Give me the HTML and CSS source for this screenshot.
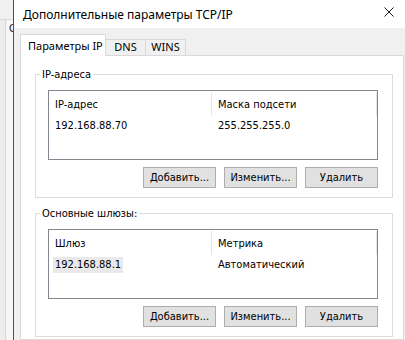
FILE: index.html
```html
<!DOCTYPE html>
<html lang="ru">
<head>
  <meta charset="UTF-8" />
  <title>Дополнительные параметры TCP/IP</title>
  <link rel="stylesheet" href="styles.css">
</head>
<body>
  <div class="backdrop">
    <div class="backdrop-top"></div>
    <div class="backdrop-body">
      <div class="backdrop-edge"></div>
      <div class="backdrop-fill"><span class="peek">С</span></div>
    </div>
  </div>

  <div class="dialog">
    <div class="titlebar">
      <span class="title">Дополнительные параметры TCP/IP</span>
      <svg class="close" width="10" height="10" viewBox="0 0 10 10">
        <path d="M0.5 0.5 L9.5 9.5 M9.5 0.5 L0.5 9.5" stroke="#1a1a1a" stroke-width="1" fill="none"/>
      </svg>
    </div>

    <div class="dialog-body">
      <div class="tabs">
        <div class="tab active">Параметры IP</div>
        <div class="tab">DNS</div>
        <div class="tab">WINS</div>
      </div>

      <div class="tab-page">
        <fieldset class="group">
          <legend>IP-адреса</legend>
          <div class="group-body">
            <div class="listbox">
              <div class="lv-head">
                <div class="lv-col first">IP-адрес</div>
                <div class="lv-col second">Маска подсети</div>
              </div>
              <div class="lv-row">
                <div class="lv-cell first"><span class="item">192.168.88.70</span></div>
                <div class="lv-cell second">255.255.255.0</div>
              </div>
            </div>
            <div class="buttons">
              <button class="btn">Добавить...</button>
              <button class="btn">Изменить...</button>
              <button class="btn">Удалить</button>
            </div>
          </div>
        </fieldset>

        <fieldset class="group">
          <legend>Основные шлюзы:</legend>
          <div class="group-body">
            <div class="listbox">
              <div class="lv-head">
                <div class="lv-col first">Шлюз</div>
                <div class="lv-col second">Метрика</div>
              </div>
              <div class="lv-row">
                <div class="lv-cell first"><span class="item selected">192.168.88.1</span></div>
                <div class="lv-cell second">Автоматический</div>
              </div>
            </div>
            <div class="buttons">
              <button class="btn">Добавить...</button>
              <button class="btn">Изменить...</button>
              <button class="btn">Удалить</button>
            </div>
          </div>
        </fieldset>
      </div>
    </div>
  </div>
</body>
</html>
```

FILE: styles.css
```css
:root {
  --dlg-bg: #f0f0f0;
  --tab-border: #d9d9d9;
  --group-border: #dcdcdc;
  --list-border: #828790;
  --btn-bg: #e1e1e1;
  --btn-border: #adadad;
}

* {
  margin: 0;
  padding: 0;
  box-sizing: border-box;
}

body {
  width: 405px;
  height: 340px;
  overflow: hidden;
  display: flex;
  background-color: var(--dlg-bg);
  font-family: "DejaVu Sans Condensed", "DejaVu Sans", sans-serif;
  font-stretch: condensed;
  font-size: 11px;
  color: #000;
}

/* окно позади диалога */
.backdrop {
  width: 13px;
  flex: none;
  display: flex;
  flex-direction: column;
}

.backdrop-top {
  height: 20px;
  background-color: #f0f0f0;
  border-bottom: 1px solid #dadada;
}

.backdrop-body {
  flex: 1;
  display: flex;
}

.backdrop-edge {
  width: 6px;
  background-color: #ececec;
  border-right: 1px solid #d6d6d6;
}

.backdrop-fill {
  flex: 1;
  overflow: hidden;
  background-color: #f6f6f6;
  padding: 2px 0 0 3px;
}

.peek {
  font-size: 11px;
  color: #222;
}

/* диалог */
.dialog {
  flex: 1;
  min-width: 0;
  display: flex;
  flex-direction: column;
  border-left: 1px solid #4f4f4f;
}

.titlebar {
  height: 28px;
  flex: none;
  background-color: #fff;
  display: flex;
  align-items: center;
  padding-left: 9px;
}

.title {
  flex: 1;
  font-family: "Segoe UI", "Noto Sans", sans-serif;
  font-stretch: normal;
  font-size: 12px;
  margin-top: 1px;
}

.close {
  margin-right: 11px;
  margin-bottom: 4px;
}

.dialog-body {
  flex: 1;
  display: flex;
  flex-direction: column;
  padding: 6px 0 0 6px;
}

.tabs {
  display: flex;
  align-items: flex-end;
  height: 22px;
  margin-bottom: -1px;
  position: relative;
  z-index: 1;
}

.tab {
  width: 41px;
  height: 16px;
  margin-bottom: 1px;
  border: 1px solid var(--tab-border);
  border-bottom: none;
  background-color: var(--dlg-bg);
  font-family: "Segoe UI", "Noto Sans", sans-serif;
  font-stretch: normal;
  font-size: 11px;
  line-height: 14px;
  text-align: center;
}

.tab + .tab {
  margin-left: -1px;
}

.tab.active {
  width: 86px;
  height: 22px;
  margin-bottom: 0;
  padding: 3px 0 0 7px;
  line-height: 16px;
  text-align: left;
  background-color: #fff;
}

.tab-page {
  flex: 1;
  margin-right: 1px;
  background-color: #fff;
  border: 1px solid var(--tab-border);
  padding: 12px 10px 0 14px;
  display: flex;
  flex-direction: column;
  gap: 9px;
}

.group {
  border: 1px solid var(--group-border);
  padding: 0 0 9px 4px;
  min-width: 0;
}

.group legend {
  padding: 0 2px;
  line-height: 13px;
}

.group-body {
  padding: 9px 14px 0 8px;
}

.listbox {
  height: 70px;
  border: 1px solid var(--list-border);
  background-color: #fff;
}

.lv-head {
  display: flex;
  height: 27px;
}

.lv-col {
  height: 24px;
  margin-top: 1px;
  padding-left: 6px;
  line-height: 25px;
  border-right: 1px solid #e5e5e5;
}

.lv-col.first {
  width: 163px;
}

.lv-col.second {
  width: 165px;
}

.lv-row {
  display: flex;
  height: 16px;
  line-height: 16px;
}

.lv-cell.first {
  width: 163px;
  padding-left: 4px;
}

.lv-cell.second {
  padding-left: 6px;
}

.item {
  display: inline-block;
  padding: 0 2px;
}

.item.selected {
  background-color: #e9e9e9;
}

.buttons {
  display: flex;
  justify-content: flex-end;
  gap: 8px;
  margin-top: 7px;
}

.btn {
  width: 73px;
  height: 21px;
  background-color: var(--btn-bg);
  border: 1px solid var(--btn-border);
  font: inherit;
  font-stretch: condensed;
  line-height: 19px;
  color: #000;
}
```
